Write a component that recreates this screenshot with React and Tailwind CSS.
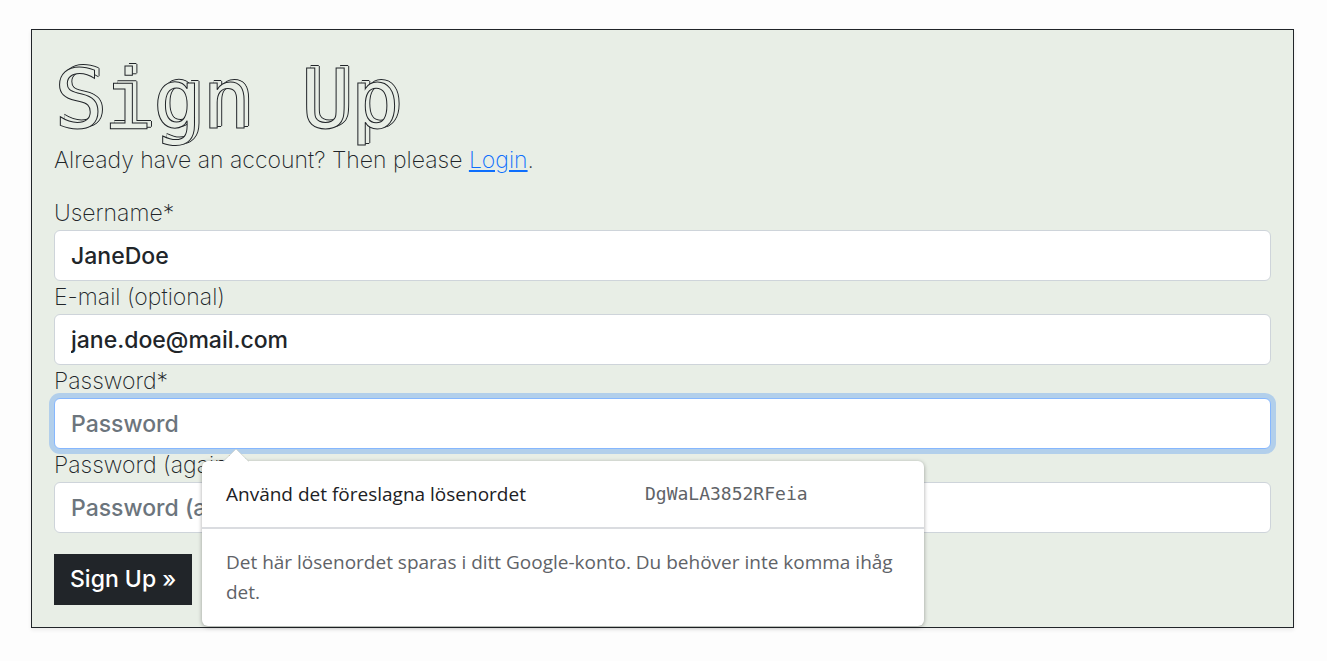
import { useState } from "react";

const inputBase =
  "block w-full h-[51px] rounded-md border bg-white px-4 font-medium text-[#212529] placeholder:text-[#6c757d] placeholder:opacity-100 outline-none";

function Field({ id, label, type = "text", focused = false, children, ...rest }) {
  return (
    <div className="relative">
      <label htmlFor={id} className="block">
        {label}
      </label>
      <input
        id={id}
        type={type}
        className={
          inputBase +
          (focused
            ? " border-[#86b7fe] shadow-[0_0_0_5px_#b2cfeb]"
            : " border-[#ced4da]")
        }
        {...rest}
      />
      {children}
    </div>
  );
}

function PasswordSuggestion() {
  return (
    <div className="absolute top-full left-[148px] z-10 mt-3 w-[722px] max-w-full rounded-md bg-white font-['Open_Sans',sans-serif] text-[19px] leading-[30px] font-normal shadow-[0_1px_4px_rgba(0,0,0,0.35)]">
      <svg
        className="absolute -top-3 left-[21px] h-[13px] w-[26px]"
        viewBox="0 0 26 13"
        aria-hidden="true"
      >
        <path d="M0 13 L13 0 L26 13 Z" fill="#fff" />
        <path d="M0 12.5 L13 0 L26 12.5" fill="none" stroke="#c9cfc9" strokeWidth="0.7" />
      </svg>
      <button
        type="button"
        className="grid h-[66px] w-full grid-cols-[419px_1fr] items-center px-6 text-left text-[#202124]"
      >
        <span>Använd det föreslagna lösenordet</span>
        <span className="font-['DejaVu_Sans_Mono',monospace] text-[18px] text-[#5f6368]">
          DgWaLA3852RFeia
        </span>
      </button>
      <p className="border-t-2 border-[#dadce0] px-6 pt-[18px] pb-[19px] text-[#5f6368]">
        Det här lösenordet sparas i ditt Google-konto. Du behöver inte komma ihåg det.
      </p>
    </div>
  );
}

export default function App() {
  const [username, setUsername] = useState("JaneDoe");
  const [email, setEmail] = useState("jane.doe@mail.com");

  return (
    <div className="min-h-screen bg-[#fdfdfd] pt-[29px] pb-8 font-['Inter',sans-serif] text-[23px] leading-[33px] font-extralight text-[#212529]">
      <main className="mr-[33px] ml-[31px] border border-[#212529] bg-[#e8eee6] p-[22px] shadow-[0_2px_4px_rgba(0,0,0,0.075)]">
        <h1 className="pt-1 font-['DejaVu_Sans_Mono',monospace] text-[82px] leading-[88px] font-normal text-[#e8eee6] [-webkit-text-stroke:1px_#212529] [text-shadow:4px_-2px_0_#e8eee6,5px_-2px_0_#212529,4px_-3px_0_#212529,4px_-1px_0_#212529]">
          Sign Up
        </h1>
        <p>
          Already have an account? Then please{" "}
          <a href="#login" className="text-[#0d6efd] underline decoration-2 underline-offset-2">
            Login
          </a>
          .
        </p>
        <form className="mt-5">
          <Field
            id="username"
            label="Username*"
            value={username}
            onChange={(e) => setUsername(e.target.value)}
          />
          <Field
            id="email"
            label="E-mail (optional)"
            type="email"
            value={email}
            onChange={(e) => setEmail(e.target.value)}
          />
          <Field id="password" label="Password*" type="password" placeholder="Password" focused>
            <PasswordSuggestion />
          </Field>
          <Field
            id="password-again"
            label="Password (again)*"
            type="password"
            placeholder="Password (again)"
          />
          <button
            type="submit"
            className="mt-[21px] block h-[51px] bg-[#212529] px-4 font-medium text-white"
          >
            Sign Up »
          </button>
        </form>
      </main>
    </div>
  );
}
